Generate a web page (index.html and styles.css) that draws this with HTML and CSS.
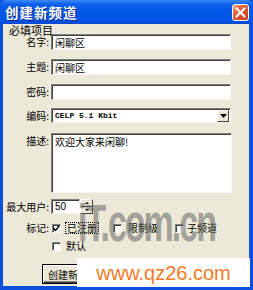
FILE: index.html
```html
<!DOCTYPE html>
<html>
<head>
<meta charset="utf-8">
<link rel="stylesheet" href="styles.css">
</head>
<body>
<div class="window">
  <div class="titlebar">
    <span class="title">创建新频道</span>
    <span class="close"><svg width="11" height="11" viewBox="0 0 11 11"><path d="M1.5 1.5 L9.5 9.5 M9.5 1.5 L1.5 9.5" stroke="#fff" stroke-width="2" stroke-linecap="square"/></svg></span>
  </div>
  <div class="body">
    <div class="legend">必填项目</div>
    <div class="row r-first"><span class="lbl">名字:</span><div class="edit">闲聊区</div></div>
    <div class="row r-next"><span class="lbl">主题:</span><div class="edit">闲聊区</div></div>
    <div class="row r-next"><span class="lbl">密码:</span><div class="edit"></div></div>
    <div class="row r-combo"><span class="lbl">编码:</span><div class="combo"><span class="combo-text">CELP 5.1 Kbit</span><span class="drop"><svg width="7" height="4" viewBox="0 0 7 4"><path d="M0 0 H7 L3.5 4 Z" fill="#000"/></svg></span></div></div>
    <div class="row r-area"><span class="lbl lbl-top">描述:</span><div class="area">欢迎大家来闲聊!</div></div>
    <div class="row r-spin"><span class="lbl">最大用户:</span><div class="spin-edit">50</div><div class="spin-btns"><span class="sb"><i class="up"></i></span><span class="sb"><i class="down"></i></span></div></div>
    <div class="row r-check"><span class="lbl">标记:</span>
      <span class="cb checked"><svg width="7" height="7" viewBox="0 0 7 7"><path d="M0.5 3 L2.5 5.5 L6.5 0.5" stroke="#000" stroke-width="1.4" fill="none"/></svg></span><span class="cb-text focus">已注册</span>
      <span class="cb cb2"></span><span class="cb-text t2">限制级</span>
      <span class="cb cb3"></span><span class="cb-text t3">子频道</span>
    </div>
    <div class="row r-check2"><span class="lbl"></span><span class="cb"></span><span class="cb-text t4">默认</span></div>
    <div class="r-button"><span class="btn">创建新频道</span></div>
  </div>
  <div class="wm-it">iT.com.cn</div>
  <div class="wm-site">www.qz26.com</div>
</div>
</body>
</html>
```
FILE: styles.css
```css
* { box-sizing: border-box; }
html, body { margin: 0; padding: 0; }
body { width: 253px; height: 290px; overflow: hidden; background: #0a50dc; font-family: "Noto Sans CJK SC", "DejaVu Sans", sans-serif; }
.window { position: relative; width: 253px; height: 290px; }
.titlebar {
  height: 24px;
  display: flex;
  align-items: center;
  justify-content: space-between;
  padding: 0 4px 0 5px;
  background: linear-gradient(#3d8af7 0%, #0b5fe9 18%, #0054e3 50%, #0057e8 80%, #0a48cf 100%);
  border-radius: 6px 6px 0 0;
}
.title { color: #fff; font-size: 13.5px; font-weight: bold; letter-spacing: 1px; line-height: 16px; text-shadow: 1px 1px 0 #0a2a8a; }
.close {
  width: 17px; height: 17px;
  display: flex; align-items: center; justify-content: center;
  background: linear-gradient(135deg, #f0a080 0%, #e05a34 45%, #c83c1a 100%);
  border: 1px solid #fff;
  border-radius: 3px;
}
.body {
  height: 266px;
  background: #ece9d8;
  border-left: 3px solid #0a50dc;
  border-right: 4px solid #0a50dc;
  border-bottom: 4px solid #0a50dc;
  font-size: 10px;
  color: #000;
}
.legend { height: 10px; line-height: 12px; padding-left: 6px; font-size: 11px; position: relative; }
.row { display: flex; align-items: center; }
.lbl { width: 46px; margin-right: 2px; text-align: right; line-height: 12px; font-size: 10px; white-space: nowrap; flex: none; }
.lbl-top { align-self: flex-start; margin-top: 2px; }
.r-first { height: 16px; }
.r-next { height: 16px; margin-top: 9px; }
.edit, .spin-edit, .area, .combo {
  background: #fff;
  border-top: 1px solid #808080;
  border-left: 1px solid #808080;
  border-right: 1px solid #f4f4f0;
  border-bottom: 1px solid #f4f4f0;
  box-shadow: inset 1px 1px 0 #404040;
}
.edit { width: 180px; height: 16px; padding: 2px 0 0 3px; line-height: 12px; font-size: 10px; }
.r-combo { height: 15px; margin-top: 8px; }
.combo { width: 180px; height: 15px; display: flex; align-items: center; justify-content: space-between; padding: 0 1px 0 3px; }
.combo-text { font-family: "Liberation Mono", monospace; font-size: 8px; font-weight: bold; line-height: 10px; }
.drop {
  width: 12px; height: 12px;
  display: flex; align-items: center; justify-content: center;
  background: #ece9d8;
  border-top: 1px solid #fff; border-left: 1px solid #fff;
  border-right: 1px solid #404040; border-bottom: 1px solid #404040;
}
.r-area { height: 60px; margin-top: 10px; align-items: flex-start; }
.area { width: 181px; height: 60px; padding: 2px 0 0 3px; line-height: 12px; font-size: 10px; }
.r-spin { height: 15px; margin-top: 6px; }
.spin-edit { width: 29px; height: 15px; padding: 1px 0 0 3px; line-height: 12px; font-size: 10px; font-family: "Liberation Sans", sans-serif; }
.spin-btns { width: 13px; height: 15px; display: flex; flex-direction: column; }
.sb {
  flex: 1;
  display: flex; align-items: center; justify-content: center;
  background: #ece9d8;
  border-top: 1px solid #fff; border-left: 1px solid #fff;
  border-right: 1px solid #404040; border-bottom: 1px solid #404040;
}
.sb i { display: block; width: 0; height: 0; border-left: 2px solid transparent; border-right: 2px solid transparent; }
.sb .up { border-bottom: 2px solid #000; }
.sb .down { border-top: 2px solid #000; }
.r-check { height: 12px; margin-top: 8px; }
.r-check2 { height: 12px; margin-top: 6px; }
.cb {
  width: 9px; height: 9px; flex: none;
  background: #fff;
  border-top: 1px solid #808080; border-left: 1px solid #808080;
  border-right: 1px solid #fff; border-bottom: 1px solid #fff;
  box-shadow: inset 1px 1px 0 #404040;
  display: flex; align-items: center; justify-content: center;
  margin-left: 1px;
}
.cb-text { line-height: 12px; white-space: nowrap; }
.focus { margin-left: 4px; padding: 0 1px; border: 1px dotted #000; height: 12px; line-height: 10px; }
.cb2 { margin-left: 14px; }
.t2 { margin-left: 6px; }
.cb3 { margin-left: 17px; }
.t3 { margin-left: 3px; }
.t4 { margin-left: 5px; }
.r-button { margin-top: 13px; padding-left: 40px; display: flex; }
.btn {
  width: 60px; height: 18px;
  display: flex; align-items: center; justify-content: center;
  background: #ece9d8;
  border-top: 1px solid #fff; border-left: 1px solid #fff;
  border-right: 1px solid #404040; border-bottom: 1px solid #404040;
  box-shadow: inset -1px -1px 0 #808080, 0 0 0 1px #000;
  font-size: 10px;
}
.wm-it {
  position: absolute; left: 78px; top: 196px;
  font-family: "Liberation Sans", sans-serif; font-weight: bold; font-size: 34px; letter-spacing: -2px;
  color: rgba(100, 100, 100, 0.55);
  transform: scaleY(1.55); transform-origin: top left;
  line-height: 34px;
}
.wm-site {
  position: absolute; left: 77px; top: 258px; width: 173px; height: 29px;
  background: #fff;
  display: flex; align-items: center; justify-content: center;
  font-family: "Liberation Sans", sans-serif; font-size: 20px;
  color: #f47a26;
  padding-top: 2px;
}
```
